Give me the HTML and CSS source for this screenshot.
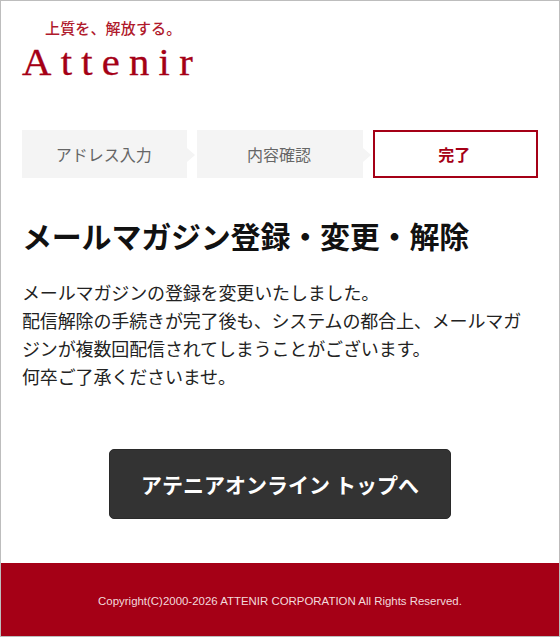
FILE: index.html
```html
<!DOCTYPE html>
<html lang="ja">
<head>
<meta charset="utf-8">
<title>メールマガジン登録・変更・解除</title>
<link rel="stylesheet" href="styles.css">
</head>
<body>
<div class="page">
  <header class="logo">
    <div class="tagline">上質を、解放する。</div>
    <div class="brand">Attenir</div>
  </header>
  <ol class="steps">
    <li class="step">アドレス入力</li>
    <li class="step">内容確認</li>
    <li class="step step-current">完了</li>
  </ol>
  <main class="content">
    <h1 class="title">メールマガジン登録・変更・解除</h1>
    <p class="message">メールマガジンの登録を変更いたしました。<br>配信解除の手続きが完了後も、システムの都合上、メールマガジンが複数回配信されてしまうことがございます。<br>何卒ご了承くださいませ。</p>
    <div class="actions"><a class="button" href="#">アテニアオンライン トップへ</a></div>
  </main>
  <footer class="footer">Copyright(C)2000-2026 ATTENIR CORPORATION All Rights Reserved.</footer>
</div>
</body>
</html>
```
FILE: styles.css
```css
* { box-sizing: border-box; }
html, body { margin: 0; padding: 0; }
body { background: #fff; color: #222; font-family: "Noto Sans CJK JP", "Liberation Sans", sans-serif; }
.page { width: 560px; height: 637px; border: 1px solid #bdbdbd; display: flex; flex-direction: column; }
.logo { padding: 17px 0 0 21px; height: 129px; color: #a50016; }
.tagline { margin-left: 23px; font-size: 15px; line-height: 20px; letter-spacing: 0.15px; font-weight: 500; color: #b01a2c; }
.brand { width: fit-content; font-family: "Liberation Serif", serif; font-size: 37px; line-height: 40px; letter-spacing: 8.4px; margin-top: 5px; transform: scaleX(1.1); transform-origin: left center; -webkit-text-stroke: 0.3px #a50016; }
.steps { list-style: none; margin: 0; padding: 0 21px; display: grid; grid-template-columns: repeat(3, 1fr); gap: 10px; height: 48px; }
.step { position: relative; padding-right: 2px; background: #f4f4f4; color: #666; font-size: 16px; display: flex; align-items: center; justify-content: center; }
.step:not(.step-current)::after { content: ""; position: absolute; left: 100%; top: 50%; margin-top: -6px; border-left: 8px solid #f4f4f4; border-top: 7px solid transparent; border-bottom: 7px solid transparent; }
.step-current { background: #fff; border: 2px solid #a50016; color: #a50016; font-weight: 700; }
.content { flex: 1; padding: 35px 21px 0; }
.title { margin: 0; font-size: 30px; line-height: 44px; letter-spacing: -0.2px; font-weight: 700; color: #111; }
.message { margin: 21px 0 0; font-size: 18px; line-height: 28px; letter-spacing: -0.14px; color: #222; }
.actions { margin-top: 59px; display: flex; justify-content: center; }
.button { width: 342px; height: 70px; background: #333; border: 1px solid #2a2a2a; border-radius: 5px; color: #fff; font-size: 21px; font-weight: 700; text-decoration: none; display: flex; align-items: center; justify-content: center; }
.footer { height: 73px; padding-top: 2px; background: #a50016; color: #f2d9dc; font-family: "Liberation Sans", sans-serif; font-size: 11.45px; display: flex; align-items: center; justify-content: center; }
```
